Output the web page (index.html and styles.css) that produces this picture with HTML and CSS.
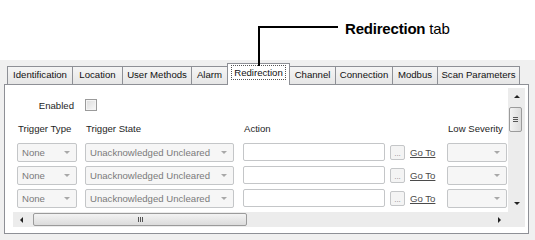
FILE: index.html
```html
<!DOCTYPE html>
<html lang="en">
<head>
    <meta charset="UTF-8">
    <meta name="viewport" content="width=device-width, initial-scale=1.0">
    <title>Redirection tab</title>
    <link rel="stylesheet" href="styles.css">
</head>
<body>
    <!-- Callout pointing at the selected tab -->
    <div class="callout">
        <span class="leader"></span>
        <span class="callout-label"><b>Redirection</b> tab</span>
    </div>

    <div class="header"></div>

    <div class="window">
        <div class="tabs">
            <div class="tab">Identification</div>
            <div class="tab">Location</div>
            <div class="tab">User Methods</div>
            <div class="tab">Alarm</div>
            <div class="tab selected"><span class="focus">Redirection</span></div>
            <div class="tab">Channel</div>
            <div class="tab">Connection</div>
            <div class="tab">Modbus</div>
            <div class="tab">Scan Parameters</div>
        </div>

        <div class="panel">
            <div class="viewport">
                <div class="content">
                    <div class="row enabled-row">
                        <span class="enabled-label">Enabled</span>
                        <span class="checkbox"></span>
                    </div>

                    <div class="row head-row">
                        <span>Trigger Type</span>
                        <span>Trigger State</span>
                        <span>Action</span>
                        <span></span>
                        <span></span>
                        <span>Low Severity</span>
                    </div>

                    <div class="row item-row">
                        <div class="combo small"><span>None</span><i class="drop"></i></div>
                        <div class="combo wide"><span>Unacknowledged Uncleared</span><i class="drop"></i></div>
                        <div class="field"></div>
                        <div class="dots">...</div>
                        <a class="goto" href="#">Go To</a>
                        <div class="combo small"><span></span><i class="drop"></i></div>
                    </div>

                    <div class="row item-row">
                        <div class="combo small"><span>None</span><i class="drop"></i></div>
                        <div class="combo wide"><span>Unacknowledged Uncleared</span><i class="drop"></i></div>
                        <div class="field"></div>
                        <div class="dots">...</div>
                        <a class="goto" href="#">Go To</a>
                        <div class="combo small"><span></span><i class="drop"></i></div>
                    </div>

                    <div class="row item-row">
                        <div class="combo small"><span>None</span><i class="drop"></i></div>
                        <div class="combo wide"><span>Unacknowledged Uncleared</span><i class="drop"></i></div>
                        <div class="field"></div>
                        <div class="dots">...</div>
                        <a class="goto" href="#">Go To</a>
                        <div class="combo small"><span></span><i class="drop"></i></div>
                    </div>
                </div>

                <!-- Vertical scrollbar -->
                <div class="vscroll">
                    <div class="sbtn"><i class="arrow up"></i></div>
                    <div class="vtrack">
                        <div class="vthumb"><span class="grip-h"></span></div>
                    </div>
                    <div class="sbtn"><i class="arrow down"></i></div>
                </div>

                <!-- Horizontal scrollbar -->
                <div class="hscroll">
                    <div class="sbtn"><i class="arrow left"></i></div>
                    <div class="htrack">
                        <div class="hthumb"><span class="grip-v"></span></div>
                    </div>
                    <div class="sbtn"><i class="arrow right"></i></div>
                </div>

                <div class="corner"></div>
            </div>
        </div>
    </div>
</body>
</html>
```

FILE: styles.css
```css
body {
    font-family: "Liberation Sans", Arial, sans-serif;
    font-size: 9.6px;
    color: #1e1e1e;
    margin: 0;
    padding: 0;
    width: 535px;
    height: 240px;
    overflow: hidden;
    position: relative;
    background-color: #fff;
}

/* Callout */
.callout {
    position: absolute;
    top: 0;
    left: 0;
    z-index: 10;
}

.leader {
    position: absolute;
    left: 258px;
    top: 26px;
    width: 78px;
    height: 38px;
    border-top: 2px solid #000;
    border-left: 2px solid #000;
}

.callout-label {
    position: absolute;
    left: 345px;
    top: 20px;
    font-size: 15px;
    line-height: 17px;
    color: #000;
    white-space: nowrap;
    letter-spacing: -0.2px;
}

.header {
    height: 60px;
}

/* Window */
.window {
    background-color: #f0f0f0;
    height: 180px;
    padding: 0 6px 0 4px;
}

.tabs {
    display: flex;
    align-items: flex-end;
    height: 24px;
    padding-left: 3px;
}

.tab {
    box-sizing: border-box;
    height: 18px;
    line-height: 16px;
    text-align: center;
    white-space: nowrap;
    border: 1px solid #8e9096;
    border-bottom: none;
    margin-left: -1px;
    background: linear-gradient(#f5f5f5, #e6e6e6);
    color: #111;
}

.tab:first-child { margin-left: 0; width: 66px; }
.tab:nth-child(2) { width: 51px; }
.tab:nth-child(3) { width: 70px; }
.tab:nth-child(4) { width: 37px; }
.tab:nth-child(5) { width: 63px; }
.tab:nth-child(6) { width: 47px; }
.tab:nth-child(7) { width: 58px; }
.tab:nth-child(8) { width: 46px; }
.tab:nth-child(9) { width: 83px; }

.tab.selected {
    position: relative;
    z-index: 2;
    height: 22px;
    margin-bottom: -1px;
    padding-top: 2px;
    background: #fff;
    line-height: 13px;
}

.focus {
    display: inline-block;
    padding: 0 2px;
    outline: 1px dotted #555;
}

.panel {
    position: relative;
    z-index: 1;
    box-sizing: border-box;
    height: 150px;
    border: 1px solid #8e9096;
    background-color: #fff;
    padding: 3px 3px 6px 8px;
}

.viewport {
    display: grid;
    grid-template-columns: 1fr 17px;
    grid-template-rows: 1fr 15px;
    height: 100%;
}

.content {
    overflow: hidden;
    padding-left: 4px;
}

.row {
    display: grid;
    grid-template-columns: 68px 158px 147px 20px 37px 60px;
    align-items: center;
}

.enabled-row {
    margin-top: 10px;
    height: 14px;
}

.enabled-label {
    text-align: right;
    padding-right: 11px;
}

.checkbox {
    box-sizing: border-box;
    width: 12px;
    height: 12px;
    border: 1px solid #9a9a9a;
    background: linear-gradient(135deg, #dcdcdc, #f8f8f8);
    box-shadow: inset 0 0 0 1px #f4f4f4;
}

.head-row {
    margin-top: 9px;
    height: 14px;
}

.head-row span {
    padding-left: 1px;
}

.item-row {
    margin-top: 4px;
    height: 19px;
}

.head-row + .item-row {
    margin-top: 8px;
}

.combo {
    box-sizing: border-box;
    display: flex;
    align-items: center;
    justify-content: space-between;
    height: 19px;
    padding: 0 6px 0 4px;
    border: 1px solid #c4c6c8;
    border-radius: 2px;
    background-color: #f6f6f6;
    color: #7a7a7a;
}

.combo.small { width: 60px; }
.combo.wide { width: 149px; }

.drop {
    width: 0;
    height: 0;
    border-left: 3px solid transparent;
    border-right: 3px solid transparent;
    border-top: 3px solid #a8a8a8;
}

.field {
    box-sizing: border-box;
    width: 142px;
    height: 18px;
    margin-top: -1px;
    border: 1px solid #c4c6c8;
    border-radius: 2px;
    background-color: #fff;
}

.dots {
    box-sizing: border-box;
    width: 15px;
    height: 15px;
    border: 1px solid #c4c6c8;
    border-radius: 2px;
    background-color: #f4f4f4;
    color: #8a8a8a;
    font-size: 8px;
    line-height: 16px;
    text-align: center;
}

.goto {
    color: #4b4b4b;
    text-decoration: underline;
    white-space: nowrap;
}

/* Scrollbars */
.vscroll {
    display: flex;
    flex-direction: column;
    background-color: #ececec;
}

.hscroll {
    display: flex;
    background-color: #ececec;
}

.corner {
    background-color: #ececec;
}

.sbtn {
    flex: none;
    width: 17px;
    height: 17px;
    display: flex;
    align-items: center;
    justify-content: center;
}

.hscroll .sbtn {
    height: 15px;
}

.arrow {
    width: 0;
    height: 0;
}

.arrow.up {
    border-left: 3px solid transparent;
    border-right: 3px solid transparent;
    border-bottom: 3px solid #222;
}

.arrow.down {
    border-left: 3px solid transparent;
    border-right: 3px solid transparent;
    border-top: 3px solid #222;
}

.arrow.left {
    border-top: 3px solid transparent;
    border-bottom: 3px solid transparent;
    border-right: 3px solid #222;
}

.arrow.right {
    border-top: 3px solid transparent;
    border-bottom: 3px solid transparent;
    border-left: 3px solid #222;
}

.vtrack {
    flex: 1;
    padding-top: 2px;
}

.vthumb {
    box-sizing: border-box;
    width: 13px;
    height: 25px;
    margin-left: 1px;
    border: 1px solid #9b9b9b;
    border-radius: 2px;
    background: linear-gradient(90deg, #f3f3f3, #dcdcdc);
    display: flex;
    align-items: center;
    justify-content: center;
}

.grip-h {
    width: 5px;
    height: 5px;
    background: repeating-linear-gradient(#555 0 1px, transparent 1px 2px);
}

.htrack {
    flex: 1;
    padding-left: 3px;
}

.hthumb {
    box-sizing: border-box;
    width: 214px;
    height: 13px;
    margin-top: 1px;
    border: 1px solid #9b9b9b;
    border-radius: 2px;
    background: linear-gradient(#f3f3f3, #dcdcdc);
    display: flex;
    align-items: center;
    justify-content: center;
}

.grip-v {
    width: 5px;
    height: 5px;
    background: repeating-linear-gradient(90deg, #555 0 1px, transparent 1px 2px);
}
```
